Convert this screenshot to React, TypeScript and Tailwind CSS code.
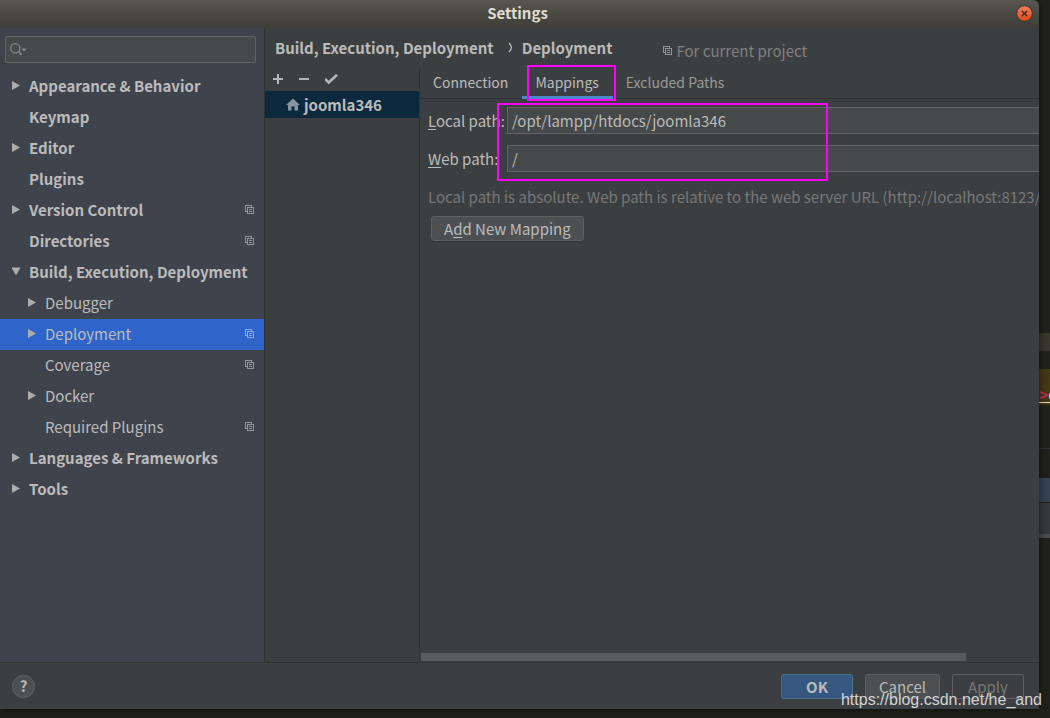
import type { ReactNode } from "react";

type TreeItem = {
  label: string;
  arrow?: "right" | "down";
  child?: boolean;
  project?: boolean;
  selected?: boolean;
};

const items: TreeItem[] = [
  { label: "Appearance & Behavior", arrow: "right" },
  { label: "Keymap" },
  { label: "Editor", arrow: "right" },
  { label: "Plugins" },
  { label: "Version Control", arrow: "right", project: true },
  { label: "Directories", project: true },
  { label: "Build, Execution, Deployment", arrow: "down" },
  { label: "Debugger", arrow: "right", child: true },
  { label: "Deployment", arrow: "right", child: true, project: true, selected: true },
  { label: "Coverage", child: true, project: true },
  { label: "Docker", arrow: "right", child: true },
  { label: "Required Plugins", child: true, project: true },
  { label: "Languages & Frameworks", arrow: "right" },
  { label: "Tools", arrow: "right" },
];

function ProjectIcon({ className }: { className: string }) {
  return (
    <svg width="9" height="9" viewBox="0 0 9 9" className={className} fill="none" stroke="currentColor" shapeRendering="crispEdges" aria-hidden="true">
      <path d="M2.5 6.5H0.5V0.5H6.5V2.5" />
      <path d="M2.5 2.5H8.5V8.5H2.5Z" />
      <path d="M4 4.5H7M4 6.5H7" />
    </svg>
  );
}

function TreeArrow({ dir }: { dir?: "right" | "down" }) {
  return (
    <svg width="9" height="9" viewBox="0 0 9 9" className="shrink-0" fill="#adadad" aria-hidden="true">
      {dir === "right" && <path d="M0 0L8 4.5L0 9Z" />}
      {dir === "down" && <path d="M-0.5 0.5H8.5L4 8.5Z" />}
    </svg>
  );
}

function Sidebar() {
  return (
    <aside className="flex w-[265px] shrink-0 flex-col border-r border-[#323232] bg-[#3f434c]">
      <div className="mx-[5px] mr-2 mt-2 flex h-[27px] items-center rounded-xs border border-[#646464] bg-[#45494a] pl-1">
        <svg width="17" height="13" viewBox="0 0 17 13" fill="none" stroke="#7f8b91" strokeWidth="1.3" aria-hidden="true">
          <circle cx="5.3" cy="5.3" r="4.6" />
          <path d="M8.6 8.6L11.5 11.8" strokeWidth="1.8" />
          <path d="M11.5 5.5H16.5L14 8.5Z" fill="#7f8b91" stroke="none" />
        </svg>
        <input type="text" aria-label="Search settings" className="min-w-0 flex-1 bg-transparent outline-none" />
      </div>
      <ul className="mt-2">
        {items.map((it) => (
          <li key={it.label}>
            <button
              type="button"
              className={`flex h-[31px] w-full items-center pr-[10px] pb-0.5 text-left ${it.child ? "gap-2 pl-7" : "gap-2 pl-3 font-bold"} ${it.selected ? "bg-[#2f65ca]" : ""}`}
            >
              <TreeArrow dir={it.arrow} />
              <span className="flex-1 whitespace-nowrap">{it.label}</span>
              {it.project && <ProjectIcon className={it.selected ? "text-[#8fa9d6]" : "text-[#8d969e]"} />}
            </button>
          </li>
        ))}
      </ul>
    </aside>
  );
}

function ServerList() {
  return (
    <section className="w-[155px] shrink-0 border-r border-[#323232]" aria-label="Servers">
      <div className="flex h-6 items-center gap-4 pl-2 text-[#b4b8ba]">
        <button type="button" aria-label="Add">
          <svg width="10" height="10" viewBox="0 0 10 10" fill="currentColor" className="block" aria-hidden="true">
            <path d="M4 0H6V4H10V6H6V10H4V6H0V4H4Z" />
          </svg>
        </button>
        <button type="button" aria-label="Remove">
          <svg width="10" height="10" viewBox="0 0 10 10" fill="currentColor" className="block" aria-hidden="true">
            <path d="M0 4H10V6H0Z" />
          </svg>
        </button>
        <button type="button" aria-label="Use as default">
          <svg width="14" height="11" viewBox="0 0 14 11" fill="none" stroke="currentColor" strokeWidth="2.6" className="block" aria-hidden="true">
            <path d="M0 5L3.8 8.5L12 0.8" />
          </svg>
        </button>
      </div>
      <button type="button" className="flex h-[27px] w-full items-center gap-1 bg-[#0d293e] pl-[21px] font-bold">
        <svg width="14" height="13" viewBox="0 0 14 13" fill="#87939a" aria-hidden="true">
          <path d="M7 0.5L14 7H12V12.5H8.5V8.5H5.5V12.5H2V7H0Z" />
        </svg>
        joomla346
      </button>
    </section>
  );
}

function Field({ id, label, value }: { id: string; label: string; value: string }) {
  return (
    <>
      <label htmlFor={id} className="whitespace-nowrap">
        <span className="underline underline-offset-2">{label[0]}</span>
        {label.slice(1)}
      </label>
      <input
        id={id}
        type="text"
        defaultValue={value}
        className="h-[27px] min-w-0 border border-r-0 border-[#646464] bg-[#45494a] px-1 outline-none"
      />
    </>
  );
}

function Details() {
  return (
    <section className="flex min-w-0 flex-1 flex-col">
      <div role="tablist" className="flex h-8 border-b border-[#323232] text-[14px]">
        <button type="button" role="tab" className="pr-[14px] pb-0.5 pl-[13px]">Connection</button>
        <button type="button" role="tab" aria-selected="true" className="relative h-8 border-b-[3px] border-[#4a88c7] pr-[14px] pl-[13px]">
          Mappings
          <span className="pointer-events-none absolute -top-0.5 -right-[3px] -bottom-[5px] left-[5px] border-2 border-[#ff00ff]" />
        </button>
        <button type="button" role="tab" className="pr-[14px] pb-0.5 pl-[13px] text-[#999999]">Excluded Paths</button>
      </div>
      <div className="flex-1 overflow-hidden pl-2 pt-2">
        <div className="relative grid grid-cols-[75px_1fr] items-center gap-x-1 gap-y-[11px]">
          <Field id="local" label="Local path:" value="/opt/lampp/htdocs/joomla346" />
          <Field id="web" label="Web path:" value="/" />
          <div className="pointer-events-none absolute -top-1 -bottom-[9px] left-[69px] w-[331px] border-2 border-[#ff00ff]" />
        </div>
        <p className="mt-[13px] whitespace-nowrap text-[#777777]">
          Local path is absolute. Web path is relative to the web server URL (http://localhost:8123/joomla346).
        </p>
        <button type="button" className="ml-[3px] mt-[7px] flex h-[25px] items-center rounded-[3px] border border-[#5e6060] bg-[#4c5052] px-3 shadow-[0_1px_1px_#00000030]">
          <span>A<span className="underline underline-offset-2">d</span>d New Mapping</span>
        </button>
      </div>
      <div className="mb-px ml-px mr-[73px] h-2 bg-[#595a5b]" />
    </section>
  );
}

function FooterButton({ children, kind }: { children: ReactNode; kind: string }) {
  return (
    <button type="button" className={`flex h-[25px] items-center justify-center rounded-[3px] border pt-0.5 ${kind}`}>
      {children}
    </button>
  );
}

export default function App() {
  return (
    <div className="relative flex h-screen overflow-hidden bg-[#20211c] pb-[9px] font-['Noto_Sans_CJK_SC','Noto_Sans',sans-serif] text-[15px] leading-6 text-[#bbbbbb]">
      <div className="z-10 flex min-w-0 flex-1 flex-col rounded-tr-md bg-[#3c3f41] shadow-[0_0_8px_#00000099]">
        <header className="relative flex h-7 shrink-0 items-center justify-center rounded-tr-md bg-linear-to-b from-[#59564e] to-[#3e3d38] pr-1 pb-0.5 font-bold text-[#dfdbd2]">
          <h1>Settings</h1>
          <button type="button" aria-label="Close" className="absolute right-[6px] top-[5px]">
            <svg width="17" height="17" viewBox="0 0 17 17" className="block" aria-hidden="true">
              <defs>
                <linearGradient id="close" x1="0" y1="0" x2="0" y2="1">
                  <stop offset="0" stopColor="#f4805c" />
                  <stop offset="1" stopColor="#df4a16" />
                </linearGradient>
              </defs>
              <circle cx="8.5" cy="8.5" r="7.8" fill="url(#close)" stroke="#38352f" />
              <path d="M5.7 5.7L11.3 11.3M11.3 5.7L5.7 11.3" stroke="#3c2a22" strokeWidth="1.3" />
            </svg>
          </button>
        </header>
        <div className="flex min-h-0 flex-1">
          <Sidebar />
          <main className="flex min-w-0 flex-1 flex-col">
            <div className="flex h-[39px] shrink-0 items-center pl-[10px]">
              <h2 className="flex items-center whitespace-nowrap font-bold">
                Build, Execution, Deployment
                <svg width="28" height="11" viewBox="-2 0 28 11" fill="none" stroke="#bbbbbb" strokeWidth="1.3" aria-hidden="true">
                  <path d="M13 1Q15.5 4 15.5 5.5Q15.5 7 13 10" />
                </svg>
                Deployment
              </h2>
              <span className="ml-[51px] mt-[6px] flex items-center gap-1 text-[#808080]">
                <ProjectIcon className="text-[#8d969e]" />
                For current project
              </span>
            </div>
            <div className="flex min-h-0 flex-1">
              <ServerList />
              <Details />
            </div>
          </main>
        </div>
        <footer className="flex h-[47px] shrink-0 items-center gap-3 border-t border-[#323232] pl-3 pr-[15px]">
          <button type="button" aria-label="Help" className="mr-auto flex size-[23px] items-center justify-center rounded-full border border-[#626567] bg-[#4c5052] font-bold">
            ?
          </button>
          <FooterButton kind="w-[72px] border-[#4c708c] bg-[#365880] font-bold">OK</FooterButton>
          <FooterButton kind="w-[75px] border-[#5e6060] bg-[#4c5052]">Cancel</FooterButton>
          <FooterButton kind="w-[72px] border-[#5e6060] text-[#777777]">Apply</FooterButton>
        </footer>
      </div>
      <div className="flex w-[11px] shrink-0 flex-col overflow-hidden pt-[333px]" aria-hidden="true">
        <div className="h-[18px] shrink-0 bg-[#38382d]" />
        <div className="mt-[18px] flex h-[34px] shrink-0 items-end border-b border-[#e8e0c0] bg-[#453815] font-['Liberation_Mono',monospace] text-[15px] leading-[10px] text-[#f92672]">
          <span>&gt;</span>
          <span className="text-[#9fd8ef]">o</span>
        </div>
        <div className="h-0.5 shrink-0 bg-[#453815]" />
        <div className="mt-[43px] h-px shrink-0 bg-[#303236]" />
        <div className="mt-[29px] h-6 shrink-0 bg-[#364252]" />
        <div className="mt-px h-[31px] shrink-0 bg-[#38393b]" />
        <div className="h-1 shrink-0 bg-[#4a4b4c]" />
      </div>
      <span className="absolute bottom-2 right-2 z-20 font-['Liberation_Sans',sans-serif] text-[16px] leading-5 text-[#d2d3d4]">
        https://blog.csdn.net/he_and
      </span>
    </div>
  );
}
